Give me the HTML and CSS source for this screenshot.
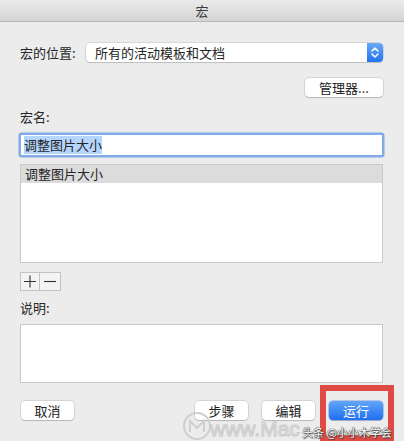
FILE: index.html
```html
<!DOCTYPE html>
<html lang="zh-CN">
<head>
<meta charset="utf-8">
<title>宏</title>
<link rel="stylesheet" href="styles.css">
</head>
<body>
<div class="window">
  <div class="titlebar">宏</div>
  <div class="content">
    <div class="row-location">
      <span class="label loc-label">宏的位置:</span>
      <div class="popup">
        <span class="popup-text">所有的活动模板和文档</span>
        <span class="stepper">
          <svg width="16" height="19" viewBox="0 0 16 19">
            <path d="M5 8 L8 5 L11 8" fill="none" stroke="#fff" stroke-width="1.5" stroke-linecap="round" stroke-linejoin="round"/>
            <path d="M5 11 L8 14 L11 11" fill="none" stroke="#fff" stroke-width="1.5" stroke-linecap="round" stroke-linejoin="round"/>
          </svg>
        </span>
      </div>
    </div>
    <div class="row-manager">
      <button class="btn btn-manager">管理器...</button>
    </div>
    <div class="label name-label">宏名:</div>
    <div class="input"><span class="selected">调整图片大小</span></div>
    <div class="list">
      <div class="list-row">调整图片大小</div>
    </div>
    <div class="plusminus">
      <span class="pm-btn">
        <svg width="20" height="19" viewBox="0 0 20 19"><path d="M10 3.5 V15.5 M4 9.5 H16" stroke="#333" stroke-width="1.1" fill="none"/></svg>
      </span>
      <span class="pm-btn">
        <svg width="20" height="19" viewBox="0 0 20 19"><path d="M4 9.5 H16" stroke="#333" stroke-width="1.1" fill="none"/></svg>
      </span>
    </div>
    <div class="label desc-label">说明:</div>
    <div class="desc"></div>
    <div class="buttons">
      <button class="btn">取消</button>
      <div class="spacer"></div>
      <button class="btn">步骤</button>
      <button class="btn">编辑</button>
      <button class="btn btn-primary">运行</button>
    </div>
  </div>
  <div class="highlight"></div>
  <div class="wm-logo">
    <svg width="30" height="30" viewBox="0 0 30 30">
      <circle cx="15" cy="15" r="13" fill="none" stroke="#cfcfcf" stroke-width="2"/>
      <path d="M8 21 V10 L15 17 L22 10 V21" fill="none" stroke="#cfcfcf" stroke-width="2"/>
    </svg>
  </div>
  <div class="wm-site">www.Mac</div>
  <div class="wm-credit">头条 @小小木学会</div>
</div>
</body>
</html>
```
FILE: styles.css
```css
html, body {
  margin: 0;
  padding: 0;
}
body {
  width: 404px;
  height: 441px;
  overflow: hidden;
  background: #ececec;
  font-family: "Noto Sans CJK SC", "Noto Sans", sans-serif;
  font-size: 13px;
  color: #262626;
}
.window {
  position: relative;
  width: 404px;
  height: 441px;
  background: #ececec;
}
.titlebar {
  height: 21px;
  line-height: 21px;
  text-align: center;
  background: linear-gradient(#ebebeb, #d4d4d4);
  border-bottom: 1px solid #b8b8b8;
  color: #3a3a3a;
  font-size: 13px;
}
.content {
  padding: 21px 21px 0 20px;
  display: flex;
  flex-direction: column;
}
.label {
  height: 18px;
  line-height: 18px;
}
.row-location {
  display: flex;
  align-items: center;
  height: 19px;
}
.loc-label {
  width: 66px;
  flex: none;
}
.popup {
  flex: 1;
  height: 19px;
  display: flex;
  align-items: center;
  background: #fff;
  border-radius: 4px;
  box-shadow: 0 0 0 0.5px rgba(0,0,0,0.18), 0 1px 1px rgba(0,0,0,0.12);
}
.popup-text {
  flex: 1;
  padding-left: 9px;
  line-height: 19px;
}
.stepper {
  width: 16px;
  height: 19px;
  border-radius: 0 4px 4px 0;
  background: linear-gradient(#6aa9f8, #2173ef);
  display: flex;
}
.row-manager {
  display: flex;
  justify-content: flex-end;
  margin-top: 16px;
}
.btn {
  height: 19px;
  width: 53px;
  padding: 0;
  border: none;
  background: #fff;
  border-radius: 4px;
  box-shadow: 0 0 0 0.5px rgba(0,0,0,0.2), 0 1px 1px rgba(0,0,0,0.14);
  font-family: inherit;
  font-size: 13px;
  line-height: 19px;
  color: #222;
}
.btn-manager {
  width: 78px;
}
.name-label {
  margin-top: 11px;
}
.input {
  margin: 9px 1px 0 1px;
  height: 20px;
  background: #fff;
  box-shadow: 0 0 0 2.5px rgba(112,160,232,0.85);
  border-radius: 1px;
  display: flex;
  align-items: center;
  padding-left: 3px;
}
.selected {
  background: #b4d5fe;
  line-height: 18px;
}
.list {
  margin-top: 9px;
  height: 97px;
  background: #fff;
  border: 1px solid #c9c9c9;
}
.list-row {
  height: 18px;
  line-height: 18px;
  background: #dcdcdc;
  padding-left: 4px;
}
.plusminus {
  display: flex;
  margin-top: 9px;
}
.pm-btn {
  width: 20px;
  height: 19px;
  box-sizing: border-box;
  border: 1px solid #c3c3c3;
  background: #f3f3f3;
  display: flex;
  align-items: center;
  justify-content: center;
}
.pm-btn + .pm-btn {
  border-left: none;
  width: 21px;
}
.pm-btn svg {
  flex: none;
}
.desc-label {
  margin-top: 8px;
}
.desc {
  margin-top: 7px;
  height: 57px;
  background: #fff;
  border: 1px solid #c9c9c9;
}
.buttons {
  display: flex;
  gap: 14px;
  margin-top: 18px;
  padding-left: 1px;
}
.spacer {
  flex: 1;
}
.btn-primary {
  width: 54px;
  background: linear-gradient(#62a6f8, #1f6ef0);
  color: #fff;
  box-shadow: 0 0 0 0.5px rgba(20,80,200,0.5), 0 1px 1px rgba(0,0,0,0.15);
}
.highlight {
  position: absolute;
  left: 320px;
  top: 385px;
  width: 62px;
  height: 44px;
  border: 6px solid #e04a44;
}
.wm-logo {
  position: absolute;
  left: 182px;
  top: 411px;
  width: 30px;
  height: 30px;
}
.wm-site {
  position: absolute;
  left: 210px;
  top: 422px;
  font-family: "Liberation Sans", sans-serif;
  font-size: 21px;
  line-height: 14px;
  height: 14px;
  color: transparent;
  -webkit-text-stroke: 1px #c9c9c9;
  white-space: nowrap;
}
.wm-credit {
  position: absolute;
  left: 302px;
  top: 425px;
  font-size: 11px;
  line-height: 14px;
  color: #fff;
  text-shadow: 0 0 1px #333, 0 0 1px #333, 1px 1px 1px #444;
  white-space: nowrap;
}
```
